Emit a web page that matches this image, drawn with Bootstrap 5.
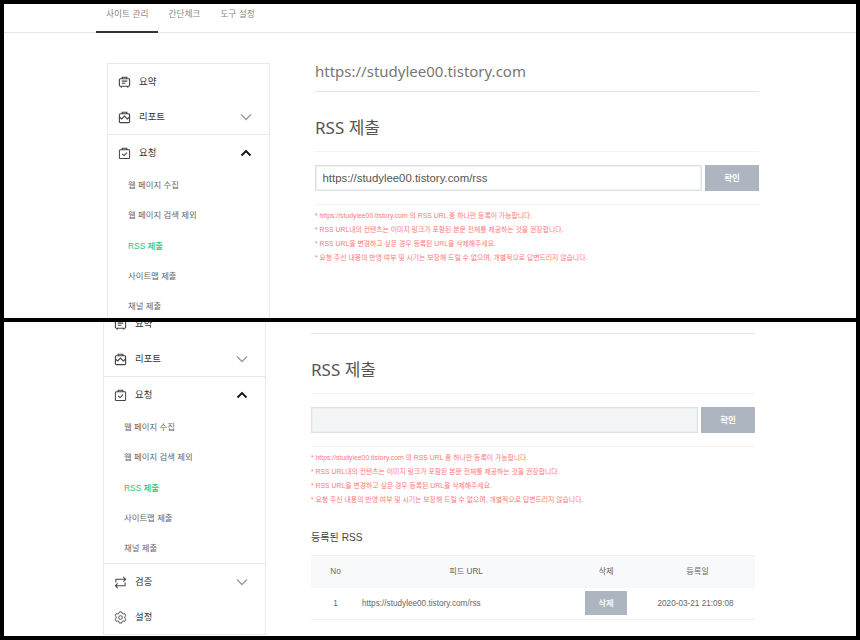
<!DOCTYPE html>
<html lang="ko">
<head>
  <meta charset="UTF-8">
  <meta name="viewport" content="width=device-width, initial-scale=1.0">
  <title>RSS 제출</title>
  <link href="https://cdn.jsdelivr.net/npm/bootstrap@5.3.3/dist/css/bootstrap.min.css" rel="stylesheet">
  <style>
    html, body { height: 640px; overflow: hidden; }
    body {
      background: #000;
      padding: 4px;
      font-family: "Liberation Sans", "Noto Sans CJK KR", sans-serif;
      color: #333;
    }
    .shot { height: 314px; background: #fff; overflow: hidden; }
    .shot + .shot { margin-top: 4px; }

    .top-tabs { height: 29px; border-bottom: 1px solid #e4e4e4; padding-left: 92px; }
    .top-tabs a { display: block; height: 28px; padding: 0 10px; line-height: 21px; font-size: 8.7px; color: #888; text-decoration: none; }
    .top-tabs a.on { border-bottom: 2px solid #333; height: 29px; }

    .page-a { padding: 30px 0 0 103px; }
    .page-b { padding-left: 99px; margin-top: -17px; }

    .side-box { width: 163px; flex: none; border: 1px solid #e9e9e9; font-size: 9.4px; }
    .side-group + .side-group { border-top: 1px solid #e9e9e9; }
    .side-item { height: 35px; padding: 1px 17px 0 10px; color: #333; }
    .side-item .ico { width: 13px; height: 13px; margin-right: 8px; color: #444; }
    .side-item .arr { width: 12px; height: 12px; margin-left: auto; color: #999; }
    .side-item .arr.open { color: #111; }
    .side-sub { margin: 0; padding: 0; list-style: none; }
    .side-sub li { height: 30.25px; line-height: 31px; padding-left: 20px; font-size: 8.4px; color: #666; }
    .side-sub li.on { color: #2fc46f; font-weight: 500; }

    .main-col { width: 444px; margin-left: 45px; flex: none; }
    .site-url { height: 29px; border-bottom: 1px solid #e4e4e4; font-family: "Noto Sans", "Noto Sans CJK KR", sans-serif; font-size: 15px; line-height: 16px; color: #777; }
    .sec-title { height: 60px; margin: 0; padding-top: 23px; border-bottom: 1px solid #f3f3f3; font-family: "Noto Sans", "Noto Sans CJK KR", sans-serif; font-size: 17px; line-height: 25px; font-weight: 400; color: #555; }
    .url-row { padding: 13px 0; border-bottom: 1px solid #f3f3f3; gap: 3px; }
    .url-input { height: 26px; padding: 0 6.5px; border: 1px solid #dde2e8; border-radius: 0; box-shadow: inset 0 0 0 1px #eef0f3; font-size: 11.4px; color: #555; }
    .url-input.empty { background: #f3f5f6; }
    .gray-btn { background: #adb6c0; border: 0; border-radius: 0; color: #fff; font-weight: 700; font-size: 8.5px; }
    .url-row .gray-btn { width: 54px; height: 26px; flex: none; padding: 0; }
    .notes { margin: 4px 0 0; padding: 0; list-style: none; font-size: 6.85px; line-height: 14px; color: #f77; }

    .reg-title { margin: 24px 0 10px; font-size: 10.1px; line-height: 14px; font-weight: 400; color: #444; }
    .reg-table { table-layout: fixed; margin: 0; font-size: 8.2px; color: #666; }
    .reg-table th, .reg-table td { padding: 1px 0 0; text-align: center; vertical-align: middle; color: #666; }
    .reg-table th { height: 32px; background: #f8f9fa; font-weight: 400; border-top: 1px solid #f1f1f1; border-bottom: 0; }
    .reg-table td { height: 32px; border-bottom: 1px solid #f0f0f0; }
    .reg-table td.url-cell { text-align: left; padding-left: 2px; }
    .reg-table td.btn-cell { padding-top: 0; }
    .reg-table td.date-cell { padding-right: 4px; }
    .reg-table .gray-btn { width: 42px; height: 24px; padding: 0; display: block; margin: 0 auto; font-weight: 500; }
    .col-no { width: 49px; }
    .col-url { width: 212px; }
    .col-del { width: 68px; }
  </style>
</head>
<body>
  <svg class="d-none">
    <defs>
      <symbol id="i-summary" viewBox="0 0 14 14">
        <path d="M2.5 3h9a1 1 0 0 1 1 1v6a1 1 0 0 1-1 1h-9a1 1 0 0 1-1-1V4a1 1 0 0 1 1-1z M4.500 3V1.300h5V3 M3.500 11v1.700 M10.500 11v1.700 M4 5.500h6 M4 7.800h4" fill="none" stroke="currentColor" stroke-width="1.200"/>
      </symbol>
      <symbol id="i-report" viewBox="0 0 14 14">
        <path d="M2.500 3h9a1 1 0 0 1 1 1v7.500a1 1 0 0 1-1 1h-9a1 1 0 0 1-1-1V4a1 1 0 0 1 1-1z M4.500 3V1.300h5V3 M1.500 6.500l2.500 2L7 5.500l3 3 2.500-2" fill="none" stroke="currentColor" stroke-width="1.200"/>
      </symbol>
      <symbol id="i-request" viewBox="0 0 14 14">
        <path d="M2.500 3h9a1 1 0 0 1 1 1v7.500a1 1 0 0 1-1 1h-9a1 1 0 0 1-1-1V4a1 1 0 0 1 1-1z M4.500 3V1.300h5V3 M4.500 7.500l2 1.800 3.200-3.300" fill="none" stroke="currentColor" stroke-width="1.100"/>
      </symbol>
      <symbol id="i-verify" viewBox="0 0 14 14">
        <path d="M2 7V3.500h10 M10 1l2.500 2.500L10 6 M12 7v3.500H2 M4 8l-2.500 2.500L4 13" fill="none" stroke="currentColor" stroke-width="1.100"/>
      </symbol>
      <symbol id="i-gear" viewBox="0 0 14 14">
        <path d="M5.700 1h2.600l.4 1.600 1.200.7 1.600-.5 1.300 2.300-1.200 1.100v1.600l1.200 1.100-1.300 2.300-1.600-.5-1.200.7-.4 1.600H5.700l-.4-1.600-1.200-.7-1.600.5-1.300-2.300 1.200-1.100V6.200L1.200 5.100l1.300-2.300 1.600.5 1.200-.7z" fill="none" stroke="currentColor" stroke-width="1"/>
        <circle cx="7" cy="7" r="2" fill="none" stroke="currentColor" stroke-width="1"/>
      </symbol>
      <symbol id="i-down" viewBox="0 0 12 12">
        <path d="M1 3.500l5 5 5-5" fill="none" stroke="currentColor" stroke-width="1.300"/>
      </symbol>
      <symbol id="i-up" viewBox="0 0 12 12">
        <path d="M1.500 8.500L6 4l4.500 4.500" fill="none" stroke="currentColor" stroke-width="1.800"/>
      </symbol>
    </defs>
  </svg>

  <!-- top capture -->
  <div class="shot">
    <nav class="top-tabs d-flex">
      <a class="on" href="#">사이트 관리</a>
      <a href="#">간단체크</a>
      <a href="#">도구 설정</a>
    </nav>
    <div class="page-a d-flex align-items-start">
      <aside class="side-box">
        <div class="side-group">
          <div class="side-item d-flex align-items-center"><svg class="ico"><use href="#i-summary"/></svg>요약</div>
          <div class="side-item d-flex align-items-center"><svg class="ico"><use href="#i-report"/></svg>리포트<svg class="arr"><use href="#i-down"/></svg></div>
        </div>
        <div class="side-group">
          <div class="side-item d-flex align-items-center"><svg class="ico"><use href="#i-request"/></svg>요청<svg class="arr open"><use href="#i-up"/></svg></div>
          <ul class="side-sub">
            <li>웹 페이지 수집</li>
            <li>웹 페이지 검색 제외</li>
            <li class="on">RSS 제출</li>
            <li>사이트맵 제출</li>
            <li>채널 제출</li>
          </ul>
        </div>
      </aside>
      <main class="main-col">
        <div class="site-url">https://studylee00.tistory.com</div>
        <h2 class="sec-title">RSS 제출</h2>
        <div class="url-row d-flex">
          <input class="form-control url-input" type="text" value="https://studylee00.tistory.com/rss">
          <button class="btn gray-btn" type="button">확인</button>
        </div>
        <ul class="notes">
          <li>* https://studylee00.tistory.com 의 RSS URL 중 하나만 등록이 가능합니다.</li>
          <li>* RSS URL내의 컨텐츠는 이미지 링크가 포함된 본문 전체를 제공하는 것을 권장합니다.</li>
          <li>* RSS URL을 변경하고 싶은 경우 등록된 URL을 삭제해주세요.</li>
          <li>* 요청 주신 내용의 반영 여부 및 시기는 보장해 드릴 수 없으며, 개별적으로 답변드리지 않습니다.</li>
        </ul>
      </main>
    </div>
  </div>

  <!-- bottom capture, same page scrolled down -->
  <div class="shot">
    <div class="page-b d-flex align-items-start">
      <aside class="side-box">
        <div class="side-group">
          <div class="side-item d-flex align-items-center"><svg class="ico"><use href="#i-summary"/></svg>요약</div>
          <div class="side-item d-flex align-items-center"><svg class="ico"><use href="#i-report"/></svg>리포트<svg class="arr"><use href="#i-down"/></svg></div>
        </div>
        <div class="side-group">
          <div class="side-item d-flex align-items-center"><svg class="ico"><use href="#i-request"/></svg>요청<svg class="arr open"><use href="#i-up"/></svg></div>
          <ul class="side-sub">
            <li>웹 페이지 수집</li>
            <li>웹 페이지 검색 제외</li>
            <li class="on">RSS 제출</li>
            <li>사이트맵 제출</li>
            <li>채널 제출</li>
          </ul>
        </div>
        <div class="side-group">
          <div class="side-item d-flex align-items-center"><svg class="ico"><use href="#i-verify"/></svg>검증<svg class="arr"><use href="#i-down"/></svg></div>
          <div class="side-item d-flex align-items-center"><svg class="ico"><use href="#i-gear"/></svg>설정</div>
        </div>
      </aside>
      <main class="main-col">
        <div class="site-url"></div>
        <h2 class="sec-title">RSS 제출</h2>
        <div class="url-row d-flex">
          <input class="form-control url-input empty" type="text">
          <button class="btn gray-btn" type="button">확인</button>
        </div>
        <ul class="notes">
          <li>* https://studylee00.tistory.com 의 RSS URL 중 하나만 등록이 가능합니다.</li>
          <li>* RSS URL내의 컨텐츠는 이미지 링크가 포함된 본문 전체를 제공하는 것을 권장합니다.</li>
          <li>* RSS URL을 변경하고 싶은 경우 등록된 URL을 삭제해주세요.</li>
          <li>* 요청 주신 내용의 반영 여부 및 시기는 보장해 드릴 수 없으며, 개별적으로 답변드리지 않습니다.</li>
        </ul>
        <h3 class="reg-title">등록된 RSS</h3>
        <table class="table reg-table">
          <thead>
            <tr><th class="col-no">No</th><th class="col-url">피드 URL</th><th class="col-del">삭제</th><th>등록일</th></tr>
          </thead>
          <tbody>
            <tr>
              <td>1</td>
              <td class="url-cell">https://studylee00.tistory.com/rss</td>
              <td class="btn-cell"><button class="btn gray-btn" type="button">삭제</button></td>
              <td class="date-cell">2020-03-21 21:09:08</td>
            </tr>
          </tbody>
        </table>
      </main>
    </div>
  </div>

  <script src="https://cdn.jsdelivr.net/npm/bootstrap@5.3.3/dist/js/bootstrap.bundle.min.js"></script>
</body>
</html>
